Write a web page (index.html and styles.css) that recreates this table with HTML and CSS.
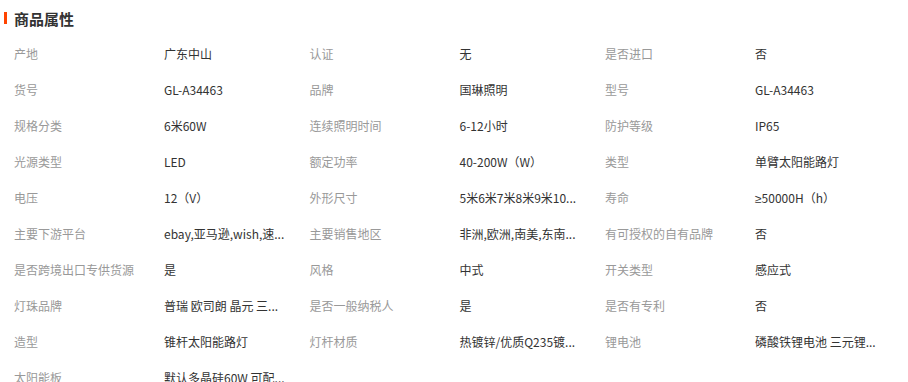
FILE: index.html
```html
<!DOCTYPE html>
<html lang="zh">
<head>
<meta charset="utf-8">
<link rel="stylesheet" href="styles.css">
</head>
<body>
<div class="box">
  <div class="title"><span class="bar"></span><span class="title-text">商品属性</span></div>
  <div class="grid">
    <div class="k">产地</div><div class="v">广东中山</div>
    <div class="k">认证</div><div class="v">无</div>
    <div class="k">是否进口</div><div class="v">否</div>

    <div class="k">货号</div><div class="v">GL-A34463</div>
    <div class="k">品牌</div><div class="v">国琳照明</div>
    <div class="k">型号</div><div class="v">GL-A34463</div>

    <div class="k">规格分类</div><div class="v">6米60W</div>
    <div class="k">连续照明时间</div><div class="v">6-12小时</div>
    <div class="k">防护等级</div><div class="v">IP65</div>

    <div class="k">光源类型</div><div class="v">LED</div>
    <div class="k">额定功率</div><div class="v">40-200W（W）</div>
    <div class="k">类型</div><div class="v">单臂太阳能路灯</div>

    <div class="k">电压</div><div class="v">12（V）</div>
    <div class="k">外形尺寸</div><div class="v">5米6米7米8米9米10...</div>
    <div class="k">寿命</div><div class="v"><span class="sym">≥</span>50000H（h）</div>

    <div class="k">主要下游平台</div><div class="v">ebay,亚马逊,wish,速...</div>
    <div class="k">主要销售地区</div><div class="v">非洲,欧洲,南美,东南...</div>
    <div class="k">有可授权的自有品牌</div><div class="v">否</div>

    <div class="k">是否跨境出口专供货源</div><div class="v">是</div>
    <div class="k">风格</div><div class="v">中式</div>
    <div class="k">开关类型</div><div class="v">感应式</div>

    <div class="k">灯珠品牌</div><div class="v">普瑞 欧司朗 晶元 三...</div>
    <div class="k">是否一般纳税人</div><div class="v">是</div>
    <div class="k">是否有专利</div><div class="v">否</div>

    <div class="k">造型</div><div class="v">锥杆太阳能路灯</div>
    <div class="k">灯杆材质</div><div class="v">热镀锌/优质Q235镀...</div>
    <div class="k">锂电池</div><div class="v">磷酸铁锂电池 三元锂...</div>

    <div class="k">太阳能板</div><div class="v">默认多晶硅60W 可配...</div>
  </div>
</div>
</body>
</html>
```
FILE: styles.css
```css
html, body {
  margin: 0;
  padding: 0;
  background: #ffffff;
}
body {
  font-family: "Noto Sans CJK SC", "Liberation Sans", sans-serif;
  font-size: 12px;
  color: #333333;
}
.box {
  width: 908px;
}
.title {
  display: flex;
  align-items: center;
  height: 36px;
  padding-left: 4px;
}
.bar {
  width: 3px;
  height: 12px;
  background: #ff4400;
  margin-right: 7px;
}
.title-text {
  font-size: 15px;
  font-weight: bold;
  color: #333333;
  line-height: 15px;
}
.grid {
  display: grid;
  grid-template-columns: 150px 145.5px 150px 145.5px 150px 145.5px;
  grid-auto-rows: 36px;
  padding-left: 14px;
}
.k, .v {
  line-height: 36px;
  white-space: nowrap;
}
.k {
  color: #999999;
}
.v {
  color: #333333;
}
.sym {
  font-family: "Liberation Sans", sans-serif;
}
```
